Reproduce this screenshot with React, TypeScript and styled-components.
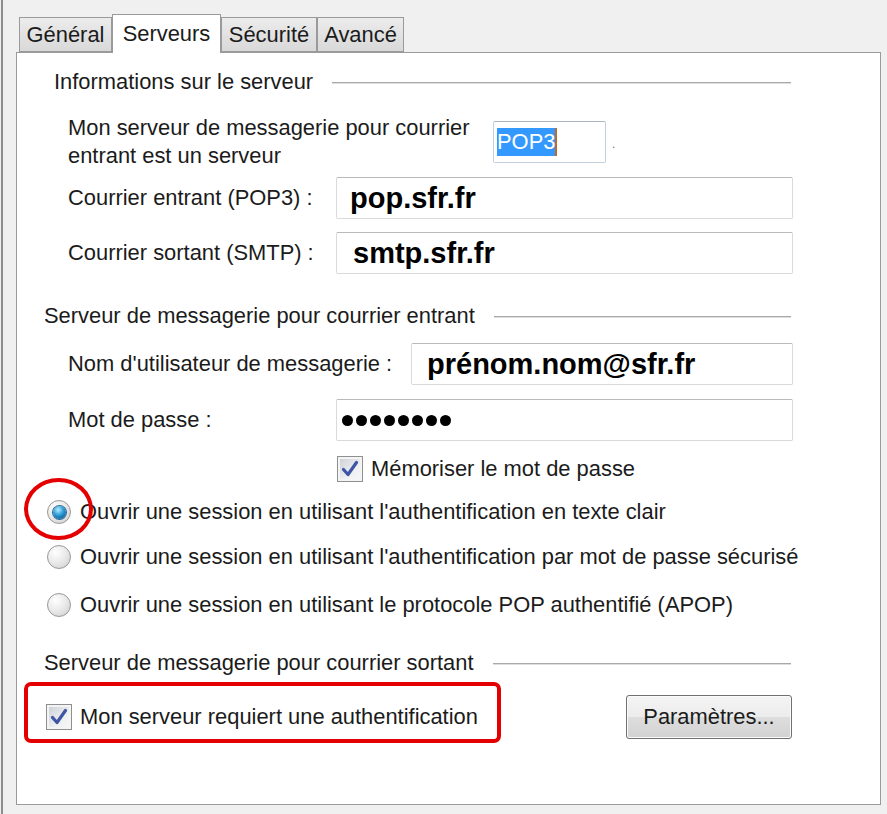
import React from "react";
import styled, { createGlobalStyle } from "styled-components";

const Global = createGlobalStyle`
  html, body { margin: 0; padding: 0; background: #f0f0f0; }
  body { font-family: "Liberation Sans", Arial, sans-serif; color: #1b1b1b; }
`;

const Window = styled.div`
  box-sizing: border-box;
  height: 814px;
  margin-left: 1px;
  border-left: 2px solid #8d8d8d;
  padding: 14px 0 0 13px;
  overflow: hidden;
`;

const TabStrip = styled.div`
  display: flex;
  align-items: flex-end;
  height: 39px;
  padding-left: 3px;
  margin-bottom: -1px;
  position: relative;
  z-index: 1;
`;

const Tab = styled.div<{ $active?: boolean; $w: number }>`
  box-sizing: border-box;
  width: ${(p) => p.$w}px;
  height: ${(p) => (p.$active ? 39 : 35)}px;
  margin-bottom: ${(p) => (p.$active ? 0 : 1)}px;
  display: flex;
  align-items: center;
  justify-content: center;
  font-size: 21.9px;
  border: 1px solid #9a9a9a;
  border-bottom: ${(p) => (p.$active ? "none" : "1px solid #9a9a9a")};
  background: ${(p) =>
    p.$active ? "#ffffff" : "linear-gradient(#ececec, #e2e2e2 50%, #d9d9d9)"};
  padding-bottom: ${(p) => (p.$active ? 1 : 0)}px;
  white-space: nowrap;
`;

const Panel = styled.div`
  box-sizing: border-box;
  width: 865px;
  height: 753px;
  border: 1px solid #9a9a9a;
  background: #ffffff;
  display: flex;
  flex-direction: column;
  padding-right: 87px;
  font-size: 21.9px;
`;

const Header = styled.div<{ $top: number; $left: number }>`
  display: flex;
  align-items: center;
  height: 24px;
  margin-top: ${(p) => p.$top}px;
  padding-left: ${(p) => p.$left}px;
`;

const HeaderText = styled.span`
  white-space: nowrap;
`;

const Rule = styled.div`
  flex: 1;
  height: 1px;
  background: #a9a9a9;
  box-shadow: 0 1px 0 #dedede;
  margin-left: 19px;
  margin-right: 2px;
`;

const FieldRow = styled.div<{ $top: number; $h: number }>`
  display: flex;
  align-items: center;
  height: ${(p) => p.$h}px;
  margin-top: ${(p) => p.$top}px;
  padding-left: 51px;
`;

const Label = styled.div<{ $w: number }>`
  width: ${(p) => p.$w}px;
  flex: none;
  line-height: 28px;
  white-space: nowrap;
`;

const TextBox = styled.div<{ $pad: number }>`
  flex: 1;
  box-sizing: border-box;
  height: 42px;
  display: flex;
  align-items: center;
  padding-left: ${(p) => p.$pad}px;
  border: 1px solid #dadada;
  border-top-color: #b9b9b9;
  border-radius: 2px;
  font-weight: bold;
  font-size: 29px;
  color: #000;
  white-space: nowrap;
`;

const TypeBox = styled.div`
  box-sizing: border-box;
  width: 113px;
  height: 42px;
  display: flex;
  align-items: center;
  padding-left: 3px;
  border: 1px solid #c3d1df;
  border-top-color: #aab4c2;
  border-radius: 2px;
`;

const Selected = styled.span`
  background: #3399ff;
  color: #ffffff;
  line-height: 28px;
  border-right: 2px solid #c06a2a;
`;

const Trailer = styled.span`
  margin-left: 6px;
  font-size: 12px;
  color: #777;
  margin-top: 4px;
`;

const Dots = styled.div`
  display: flex;
  gap: 3px;
  padding-left: 5px;
`;

const Dot = styled.span`
  width: 11px;
  height: 11px;
  border-radius: 50%;
  background: #000;
`;

const OptionRow = styled.div<{ $top: number; $h: number; $left: number; $gap: number }>`
  position: relative;
  display: flex;
  align-items: center;
  height: ${(p) => p.$h}px;
  margin-top: ${(p) => p.$top}px;
  padding-left: ${(p) => p.$left}px;
  gap: ${(p) => p.$gap}px;
  white-space: nowrap;
`;

const Box = styled.span`
  box-sizing: border-box;
  width: 26px;
  height: 26px;
  flex: none;
  border: 1px solid #8e8f8f;
  background: linear-gradient(135deg, #c9ccd2, #eef0f2 60%, #f8f8f8);
  display: flex;
  align-items: center;
  justify-content: center;
  box-shadow: inset 0 0 0 2px #f4f4f4;
`;

const Radio = styled.span`
  box-sizing: border-box;
  width: 24px;
  height: 24px;
  flex: none;
  border-radius: 50%;
  border: 1px solid #989898;
  background: radial-gradient(circle at 35% 30%, #ffffff, #e6e6e6 55%, #c9c9c9);
  display: flex;
  align-items: center;
  justify-content: center;
`;

const RadioDot = styled.span`
  width: 13px;
  height: 13px;
  border-radius: 50%;
  background: radial-gradient(circle at 40% 30%, #b6ecff, #2a9ad4 45%, #0e5a8e 85%);
  box-shadow: 0 0 0 1px #2b6a95;
`;

const RedEllipse = styled.span`
  position: absolute;
  left: 7px;
  top: -19px;
  width: 69px;
  height: 62px;
  box-sizing: border-box;
  border: 4px solid #e40000;
  border-radius: 50%;
  pointer-events: none;
`;

const AuthRow = styled.div`
  display: flex;
  align-items: flex-start;
  margin-top: 7px;
`;

const RedBox = styled.div`
  box-sizing: border-box;
  margin-left: 7px;
  width: 477px;
  height: 61px;
  border: 4px solid #e40000;
  border-radius: 7px;
  display: flex;
  align-items: center;
  padding: 8px 0 0 18px;
  gap: 8px;
  white-space: nowrap;
`;

const Button = styled.div`
  box-sizing: border-box;
  margin-left: auto;
  margin-right: 1px;
  margin-top: 13px;
  width: 166px;
  height: 44px;
  border: 1px solid #707070;
  border-radius: 3px;
  background: linear-gradient(#f4f4f4, #ececec 49%, #dddddd 51%, #d2d2d2);
  box-shadow: inset 0 0 0 1px #fbfbfb;
  display: flex;
  align-items: center;
  justify-content: center;
  font-size: 21.9px;
`;

const Check = () => (
  <svg width="20" height="20" viewBox="0 0 20 20">
    <path
      d="M3.5 10.5 L8 15.5 L16.5 3.5"
      fill="none"
      stroke="#3f56a6"
      strokeWidth="3.2"
      strokeLinecap="round"
      strokeLinejoin="round"
    />
  </svg>
);

const CheckBox = () => (
  <Box>
    <Check />
  </Box>
);

export default function App() {
  return (
    <>
      <Global />
      <Window>
        <TabStrip>
          <Tab $w={93}>Général</Tab>
          <Tab $w={109} $active>
            Serveurs
          </Tab>
          <Tab $w={96}>Sécurité</Tab>
          <Tab $w={87}>Avancé</Tab>
        </TabStrip>
        <Panel>
          <Header $top={17} $left={37}>
            <HeaderText>Informations sur le serveur</HeaderText>
            <Rule />
          </Header>

          <FieldRow $top={20} $h={56}>
            <Label $w={425}>
              Mon serveur de messagerie pour courrier
              <br />
              entrant est un serveur
            </Label>
            <TypeBox>
              <Selected>POP3</Selected>
            </TypeBox>
            <Trailer>.</Trailer>
          </FieldRow>

          <FieldRow $top={7} $h={42}>
            <Label $w={268}>Courrier entrant (POP3) :</Label>
            <TextBox $pad={13}>pop.sfr.fr</TextBox>
          </FieldRow>

          <FieldRow $top={13} $h={42}>
            <Label $w={268}>Courrier sortant (SMTP) :</Label>
            <TextBox $pad={16}>smtp.sfr.fr</TextBox>
          </FieldRow>

          <Header $top={30} $left={27}>
            <HeaderText>Serveur de messagerie pour courrier entrant</HeaderText>
            <Rule />
          </Header>

          <FieldRow $top={15} $h={42}>
            <Label $w={343}>Nom d'utilisateur de messagerie :</Label>
            <TextBox $pad={15}>prénom.nom@sfr.fr</TextBox>
          </FieldRow>

          <FieldRow $top={14} $h={42}>
            <Label $w={268}>Mot de passe :</Label>
            <TextBox $pad={0}>
              <Dots>
                {Array.from({ length: 8 }).map((_, i) => (
                  <Dot key={i} />
                ))}
              </Dots>
            </TextBox>
          </FieldRow>

          <OptionRow $top={15} $h={26} $left={320} $gap={8}>
            <CheckBox />
            <span>Mémoriser le mot de passe</span>
          </OptionRow>

          <OptionRow $top={15} $h={30} $left={30} $gap={9}>
            <Radio>
              <RadioDot />
            </Radio>
            <span>Ouvrir une session en utilisant l'authentification en texte clair</span>
            <RedEllipse />
          </OptionRow>

          <OptionRow $top={15} $h={30} $left={30} $gap={9}>
            <Radio />
            <span>
              Ouvrir une session en utilisant l'authentification par mot de passe sécurisé
            </span>
          </OptionRow>

          <OptionRow $top={18} $h={30} $left={30} $gap={9}>
            <Radio />
            <span>Ouvrir une session en utilisant le protocole POP authentifié (APOP)</span>
          </OptionRow>

          <Header $top={31} $left={27}>
            <HeaderText>Serveur de messagerie pour courrier sortant</HeaderText>
            <Rule />
          </Header>

          <AuthRow>
            <RedBox>
              <CheckBox />
              <span>Mon serveur requiert une authentification</span>
            </RedBox>
            <Button>Paramètres...</Button>
          </AuthRow>
        </Panel>
      </Window>
    </>
  );
}
